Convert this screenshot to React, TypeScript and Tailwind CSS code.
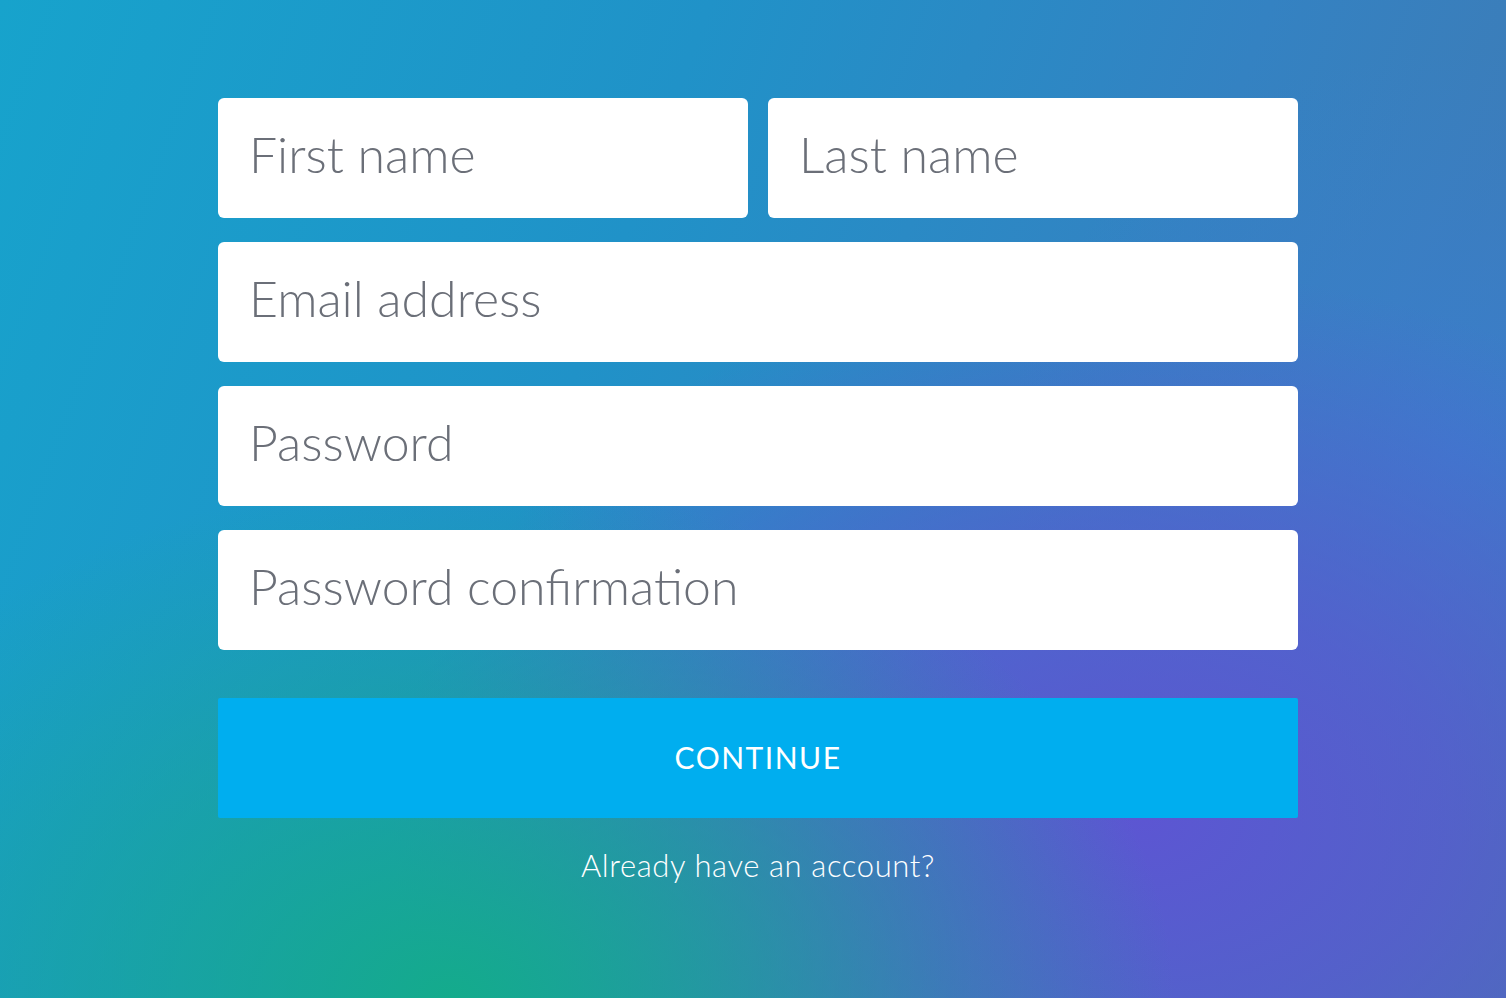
import React from 'react';

const fieldClass =
  "h-[120px] w-full rounded-md bg-white pl-[31px] pr-8 pb-2 text-[50px] font-light text-[#6b6f78] placeholder:text-[#6b6f78] outline-none font-['Lato',sans-serif]";

export default function App() {
  return (
    <div className="relative min-h-[998px] w-full overflow-hidden bg-[radial-gradient(ellipse_48%_52%_at_30%_100%,#14ab8c_0%,rgba(20,171,140,0.6)_40%,rgba(20,171,140,0)_100%),radial-gradient(ellipse_50%_55%_at_76%_82%,#5c56d2_0%,rgba(92,86,210,0.7)_40%,rgba(92,86,210,0)_100%),radial-gradient(ellipse_30%_40%_at_97%_45%,#3a7ecc_0%,rgba(58,126,204,0)_100%),linear-gradient(110deg,#17a3cc_0%,#2092c8_38%,#3482c2_68%,#4478b0_100%)]">
      <div className="ml-[218px] flex w-[1080px] flex-col pt-[98px]">
        <div className="flex gap-5">
          <input className={fieldClass} placeholder="First name" />
          <input className={fieldClass} placeholder="Last name" />
        </div>
        <input className={`${fieldClass} mt-6`} placeholder="Email address" />
        <input className={`${fieldClass} mt-6`} type="password" placeholder="Password" />
        <input className={`${fieldClass} mt-6`} type="password" placeholder="Password confirmation" />

        <button className="mt-12 h-[120px] w-full rounded-[2px] bg-[#00aeef] pb-0.5 text-[30px] font-normal tracking-[1.5px] text-white font-['Lato',sans-serif]">
          CONTINUE
        </button>

        <a className="mt-[24px] self-center text-[31px] font-light tracking-[0.6px] text-white font-['Lato',sans-serif]" href="#">
          Already have an account?
        </a>
      </div>
    </div>
  );
}
